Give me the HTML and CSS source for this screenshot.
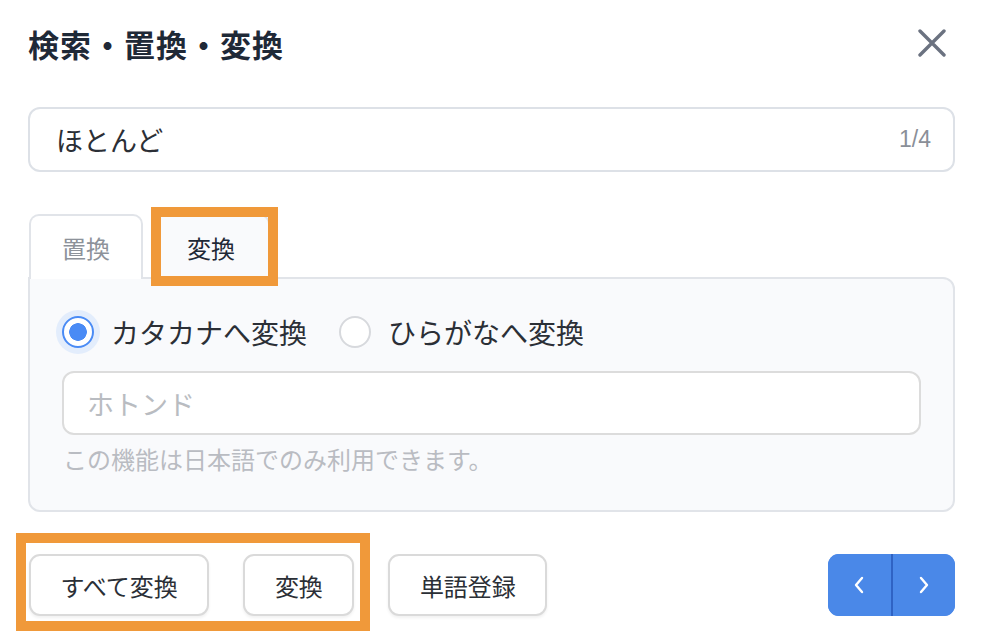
FILE: index.html
```html
<!DOCTYPE html>
<html lang="ja">
<head>
<meta charset="utf-8">
<link rel="stylesheet" href="styles.css">
</head>
<body>
<div class="dialog">
  <div class="header">
    <h1 class="title">検索・置換・変換</h1>
    <button class="close" aria-label="閉じる">
      <svg width="28" height="28" viewBox="0 0 28 28"><path d="M2 2 L26 26 M26 2 L2 26" stroke="#6b7280" stroke-width="3.4" stroke-linecap="round" fill="none"/></svg>
    </button>
  </div>

  <div class="search">
    <span class="search-text">ほとんど</span>
    <span class="count">1/4</span>
  </div>

  <div class="tabs">
    <div class="tab">置換</div>
    <div class="tab active">変換<span class="mark mark-tab"></span></div>
  </div>

  <div class="panel">
    <div class="radios">
      <label class="radio"><span class="dot checked"></span><span>カタカナへ変換</span></label>
      <label class="radio"><span class="dot"></span><span>ひらがなへ変換</span></label>
    </div>
    <div class="result"><span class="placeholder">ホトンド</span></div>
    <div class="help">この機能は日本語でのみ利用できます。</div>
  </div>

  <div class="actions">
    <div class="group">
      <button class="btn">すべて変換</button>
      <button class="btn">変換</button>
      <span class="mark mark-group"></span>
    </div>
    <button class="btn">単語登録</button>
    <div class="nav">
      <button class="nav-btn" aria-label="前へ">
        <svg width="12" height="18" viewBox="0 0 12 18"><path d="M9 2 L3 9 L9 16" stroke="#fff" stroke-width="2.4" fill="none" stroke-linecap="round" stroke-linejoin="round"/></svg>
      </button>
      <button class="nav-btn" aria-label="次へ">
        <svg width="12" height="18" viewBox="0 0 12 18"><path d="M3 2 L9 9 L3 16" stroke="#fff" stroke-width="2.4" fill="none" stroke-linecap="round" stroke-linejoin="round"/></svg>
      </button>
    </div>
  </div>
</div>
</body>
</html>
```

FILE: styles.css
```css
* { box-sizing: border-box; }
html, body { height: 100%; }
body {
  margin: 0;
  background: #ffffff;
  font-family: "Noto Sans CJK JP", "Noto Sans", sans-serif;
  color: #2b2f36;
}
.dialog {
  padding: 0 41px 23px 28px;
  min-height: 640px;
}
.header {
  height: 86px;
  display: flex;
  align-items: center;
  justify-content: space-between;
  padding-right: 9px;
}
.title {
  margin: 0;
  font-size: 31px;
  font-weight: 700;
  color: #1f2937;
  line-height: 1;
  letter-spacing: 1px;
}
.close {
  border: 0;
  background: none;
  padding: 0;
  width: 28px;
  height: 28px;
  display: flex;
}
.search {
  margin-top: 21px;
  height: 65px;
  border: 2px solid #dde1e7;
  border-radius: 12px;
  display: flex;
  align-items: center;
  justify-content: space-between;
  padding: 0 22px 0 26px;
}
.search-text {
  font-size: 27px;
  color: #2b2f36;
}
.count {
  font-family: "Liberation Sans", Arial, sans-serif;
  font-size: 23px;
  color: #8a8f98;
}
.tabs {
  margin-top: 42px;
  display: flex;
  gap: 9px;
  padding-left: 1px;
}
.tab {
  position: relative;
  height: 65px;
  width: 114px;
  border: 2px solid #e1e4e9;
  border-bottom: 0;
  border-radius: 10px 10px 0 0;
  display: flex;
  align-items: center;
  justify-content: center;
  font-size: 24px;
  color: #8d929a;
  background: #ffffff;
  margin-bottom: -2px;
}
.tab.active {
  width: 118px;
  background: #f9fafc;
  color: #1f2937;
  z-index: 1;
}
.mark {
  position: absolute;
  border: 10px solid #f0993a;
  pointer-events: none;
  z-index: 2;
}
.mark-tab {
  left: -3px;
  top: -9px;
  width: 127px;
  height: 79px;
}
.panel {
  border: 2px solid #e1e4e9;
  border-radius: 0 12px 12px 12px;
  background: #f9fafc;
  padding: 31px 32px 36px 32px;
}
.radios {
  display: flex;
  align-items: center;
  gap: 32px;
  height: 44px;
}
.radio {
  display: flex;
  align-items: center;
  gap: 17px;
  font-size: 28px;
  color: #2b2f36;
}
.dot {
  width: 32px;
  height: 32px;
  border-radius: 50%;
  border: 2px solid #d7d9dd;
  background: #ffffff;
  flex: none;
}
.dot.checked {
  border-color: #4a8bf5;
  box-shadow: 0 0 0 6px #e3edfc;
  background: radial-gradient(circle, #4a8bf5 0 8.5px, #ffffff 9.1px);
}
.result {
  margin-top: 17px;
  height: 64px;
  background: #ffffff;
  border: 2px solid #dcdcdc;
  border-radius: 12px;
  display: flex;
  align-items: center;
  padding-left: 23px;
}
.placeholder {
  font-size: 27px;
  color: #b9bcc1;
}
.help {
  margin-top: 9px;
  font-size: 24px;
  line-height: 30px;
  color: #b9bcc2;
  padding-left: 1px;
}
.actions {
  margin-top: 42px;
  display: flex;
  align-items: center;
  gap: 34px;
}
.group {
  position: relative;
  display: flex;
  gap: 34px;
  padding-left: 1px;
}
.mark-group {
  left: -12px;
  top: -21px;
  right: -16px;
  bottom: -15px;
}
.btn {
  height: 62px;
  padding: 0 29.5px;
  font-family: "Noto Sans CJK JP", "Noto Sans", sans-serif;
  font-size: 24px;
  color: #2b2f36;
  background: #ffffff;
  border: 2px solid #dadada;
  border-radius: 11px;
  box-shadow: 0 2px 3px rgba(0, 0, 0, 0.06);
}
.nav {
  margin-left: auto;
  display: flex;
  height: 62px;
  width: 127px;
  border-radius: 11px;
  overflow: hidden;
  background: #4a88e8;
}
.nav-btn {
  flex: 1;
  border: 0;
  background: #4a88e8;
  display: flex;
  align-items: center;
  justify-content: center;
  padding: 0;
}
.nav-btn + .nav-btn {
  border-left: 2px solid #2f63c4;
}
```
